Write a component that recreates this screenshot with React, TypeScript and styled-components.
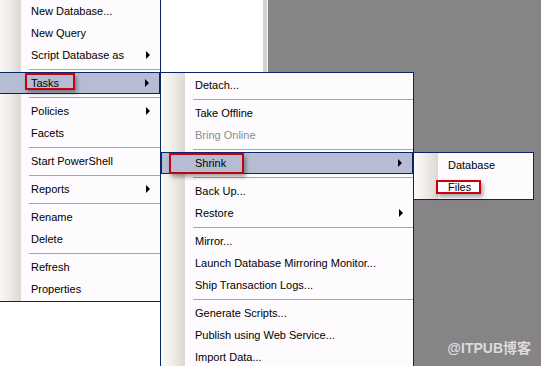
import React from 'react'
import styled, { createGlobalStyle, css } from 'styled-components'

const GlobalStyle = createGlobalStyle`
  html, body {
    margin: 0;
    padding: 0;
    overflow: hidden;
  }
`

const Desktop = styled.div`
  position: relative;
  width: 541px;
  height: 366px;
  overflow: hidden;
  display: flex;
  font-family: 'Liberation Sans', Arial, sans-serif;
  font-size: 11px;
`

const ExplorerPane = styled.div`
  width: 263px;
  background: #ffffff;
`

const PaneEdge = styled.div`
  width: 4px;
  background: #d6d3ce;
  border-right: 1px solid #f2f1ee;
`

const Workspace = styled.div`
  flex: 1;
  background: #868486;
  display: flex;
  align-items: flex-end;
  justify-content: flex-end;
  padding: 0 10px 9px 0;
`

const Watermark = styled.span`
  font-family: 'Liberation Sans', 'Noto Sans CJK SC', sans-serif;
  font-weight: bold;
  font-size: 14px;
  color: rgba(255, 255, 255, 0.72);
`

const Menu = styled.div<{ $left: number; $top: number; $width: number }>`
  position: absolute;
  left: ${(p) => p.$left}px;
  top: ${(p) => p.$top}px;
  width: ${(p) => p.$width}px;
  box-sizing: border-box;
  border: 1px solid #0a246a;
  padding: 1px 0;
  background: linear-gradient(to right, #fcfcfa 0, #efece8 12px, #dcd8d1 24px, #fdfbfd 24px);
`

const Item = styled.div<{ $active?: boolean; $disabled?: boolean }>`
  position: relative;
  height: 22px;
  box-sizing: border-box;
  display: flex;
  align-items: center;
  padding-left: 34px;
  white-space: nowrap;
  color: ${(p) => (p.$disabled ? '#8d8d8d' : '#000000')};
  ${(p) =>
    p.$active &&
    css`
      background: #b6bdd2;
      border: 1px solid #0a246a;
      padding-left: 33px;
    `}
`

const Arrow = styled.span`
  margin-left: auto;
  margin-right: 10px;
  width: 0;
  height: 0;
  border-left: 4px solid #000000;
  border-top: 4px solid transparent;
  border-bottom: 4px solid transparent;
`

const Separator = styled.div`
  height: 6px;
  margin-left: 32px;
  padding-top: 3px;
  box-sizing: border-box;

  &::before {
    content: '';
    display: block;
    height: 1px;
    background: #a6a6a6;
  }
`

const Callout = styled.span<{ $left: number; $top: number; $width: number; $height: number }>`
  position: absolute;
  left: ${(p) => p.$left}px;
  top: ${(p) => p.$top}px;
  width: ${(p) => p.$width}px;
  height: ${(p) => p.$height}px;
  box-sizing: border-box;
  border: 2px solid #c8000e;
  box-shadow: 2px 3px 4px rgba(0, 0, 0, 0.35);
`

type Mark = { left: number; top: number; width: number; height: number }

type Entry =
  | { sep: true }
  | { label: string; sub?: boolean; active?: boolean; disabled?: boolean; mark?: Mark }

const objectMenu: Entry[] = [
  { label: 'New Database...' },
  { label: 'New Query' },
  { label: 'Script Database as', sub: true },
  { sep: true },
  { label: 'Tasks', sub: true, active: true, mark: { left: 27, top: 0, width: 50, height: 17 } },
  { sep: true },
  { label: 'Policies', sub: true },
  { label: 'Facets' },
  { sep: true },
  { label: 'Start PowerShell' },
  { sep: true },
  { label: 'Reports', sub: true },
  { sep: true },
  { label: 'Rename' },
  { label: 'Delete' },
  { sep: true },
  { label: 'Refresh' },
  { label: 'Properties' },
]

const tasksMenu: Entry[] = [
  { label: 'Detach...' },
  { sep: true },
  { label: 'Take Offline' },
  { label: 'Bring Online', disabled: true },
  { sep: true },
  { label: 'Shrink', sub: true, active: true, mark: { left: 7, top: 0, width: 75, height: 21 } },
  { sep: true },
  { label: 'Back Up...' },
  { label: 'Restore', sub: true },
  { sep: true },
  { label: 'Mirror...' },
  { label: 'Launch Database Mirroring Monitor...' },
  { label: 'Ship Transaction Logs...' },
  { sep: true },
  { label: 'Generate Scripts...' },
  { label: 'Publish using Web Service...' },
  { label: 'Import Data...' },
]

const shrinkMenu: Entry[] = [
  { label: 'Database' },
  { label: 'Files', mark: { left: 22, top: 4, width: 45, height: 14 } },
]

const MenuEntries: React.FC<{ entries: Entry[] }> = ({ entries }) => (
  <>
    {entries.map((e, i) =>
      'sep' in e ? (
        <Separator key={i} />
      ) : (
        <Item key={i} $active={e.active} $disabled={e.disabled}>
          {e.label}
          {e.sub && <Arrow />}
          {e.mark && (
            <Callout $left={e.mark.left} $top={e.mark.top} $width={e.mark.width} $height={e.mark.height} />
          )}
        </Item>
      )
    )}
  </>
)

const App: React.FC = () => {
  return (
    <>
      <GlobalStyle />
      <Desktop>
        <ExplorerPane />
        <PaneEdge />
        <Workspace>
          <Watermark>@ITPUB博客</Watermark>
        </Workspace>

        <Menu $left={-4} $top={-2} $width={165}>
          <MenuEntries entries={objectMenu} />
        </Menu>
        <Menu $left={160} $top={72} $width={254}>
          <MenuEntries entries={tasksMenu} />
        </Menu>
        <Menu $left={413} $top={152} $width={121}>
          <MenuEntries entries={shrinkMenu} />
        </Menu>
      </Desktop>
    </>
  )
}

export default App
